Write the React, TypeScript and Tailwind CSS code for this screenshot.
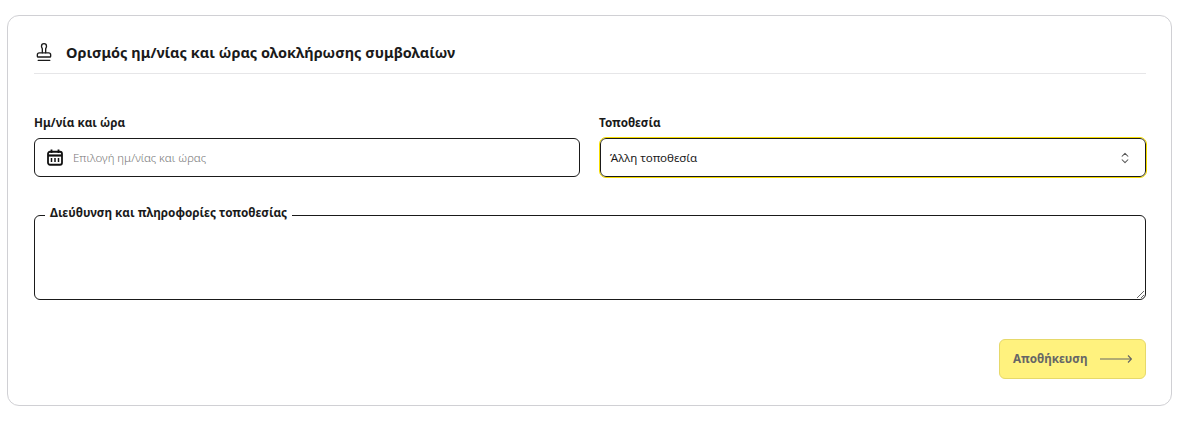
import { ChevronsUpDown, Stamp } from 'lucide-react'

const FONT = "font-['Noto_Sans','Open_Sans',sans-serif]"

function CalendarIcon() {
  return (
    <svg width="16" height="17" viewBox="0 0 16 17" fill="none" stroke="#111" strokeWidth="1.8" className="shrink-0">
      <rect x="1" y="2.75" width="14" height="13" rx="2" />
      <path d="M1 6.5h14" strokeWidth="2.2" />
      <path d="M4.5 .5v3.5M11.5 .5v3.5" />
      <path d="M4.5 9v4M8 9v4M11.5 9v4" strokeWidth="1.5" />
    </svg>
  )
}

export default function App() {
  return (
    <div className={`${FONT} bg-white w-[1182px] h-[421px] pt-[15px] pl-[7px] pr-[10px] text-[#1a1a1a]`}>
      <div className="h-[391px] rounded-[12px] border border-[#d0d0d4] pl-[26px] pr-[25px] pt-[26px]">
        {/* Header */}
        <div className="flex items-center gap-[12px] h-[32px] border-b border-[#e6e6e8] pb-[12px]">
          <Stamp size={20} strokeWidth={1.6} className="shrink-0" />
          <h2 className="text-[14.5px] font-bold leading-[20px]">
            Ορισμός ημ/νίας και ώρας ολοκλήρωσης συμβολαίων
          </h2>
        </div>

        {/* Date + location */}
        <div className="grid grid-cols-2 gap-[20px] mt-[40px]">
          <div>
            <label className="block text-[11.7px] font-bold leading-[16px] mb-[8px]">Ημ/νία και ώρα</label>
            <div className="flex items-center gap-[10px] h-[39px] rounded-[6px] border border-[#1a1a1a] pl-[12px] pr-3">
              <CalendarIcon />
              <input
                placeholder="Επιλογή ημ/νίας και ώρας"
                className="flex-1 opacity-[.99] outline-none font-light text-[11.5px] placeholder:text-[#777]"
              />
            </div>
          </div>
          <div>
            <label className="block text-[11.7px] font-bold leading-[16px] mb-[8px] -ml-px">Τοποθεσία</label>
            <div className="flex items-center justify-between h-[39px] rounded-[6px] border border-[#1a1a1a] outline outline-[1px] outline-[#f5dc00] pl-[9px] pr-[13px] text-[11.6px]">
              <span>Άλλη τοποθεσία</span>
              <ChevronsUpDown size={14} strokeWidth={1.8} className="text-[#555]" />
            </div>
          </div>
        </div>

        {/* Address */}
        <div className="relative mt-[38px]">
          <label className="absolute left-[11px] -top-[12px] bg-white px-[5px] text-[11.75px] font-bold leading-[18px]">
            Διεύθυνση και πληροφορίες τοποθεσίας
          </label>
          <textarea className="block w-full h-[85px] rounded-[6px] border border-[#1a1a1a] outline-none resize-y" />
        </div>

        {/* Actions */}
        <div className="flex justify-end mt-[39px]">
          <button className="flex items-center gap-[13px] w-[147px] h-[40px] rounded-[6px] border border-[#e6d96a] bg-[#fff27e] pl-[13px] text-[11.7px] font-bold text-[#666]">
            Αποθήκευση
            <svg width="32" height="10" viewBox="0 0 32 10" fill="none" stroke="#666" strokeWidth="1.2">
              <path d="M0 5h31.5M28 1.5 31.5 5 28 8.5" />
            </svg>
          </button>
        </div>
      </div>
    </div>
  )
}
